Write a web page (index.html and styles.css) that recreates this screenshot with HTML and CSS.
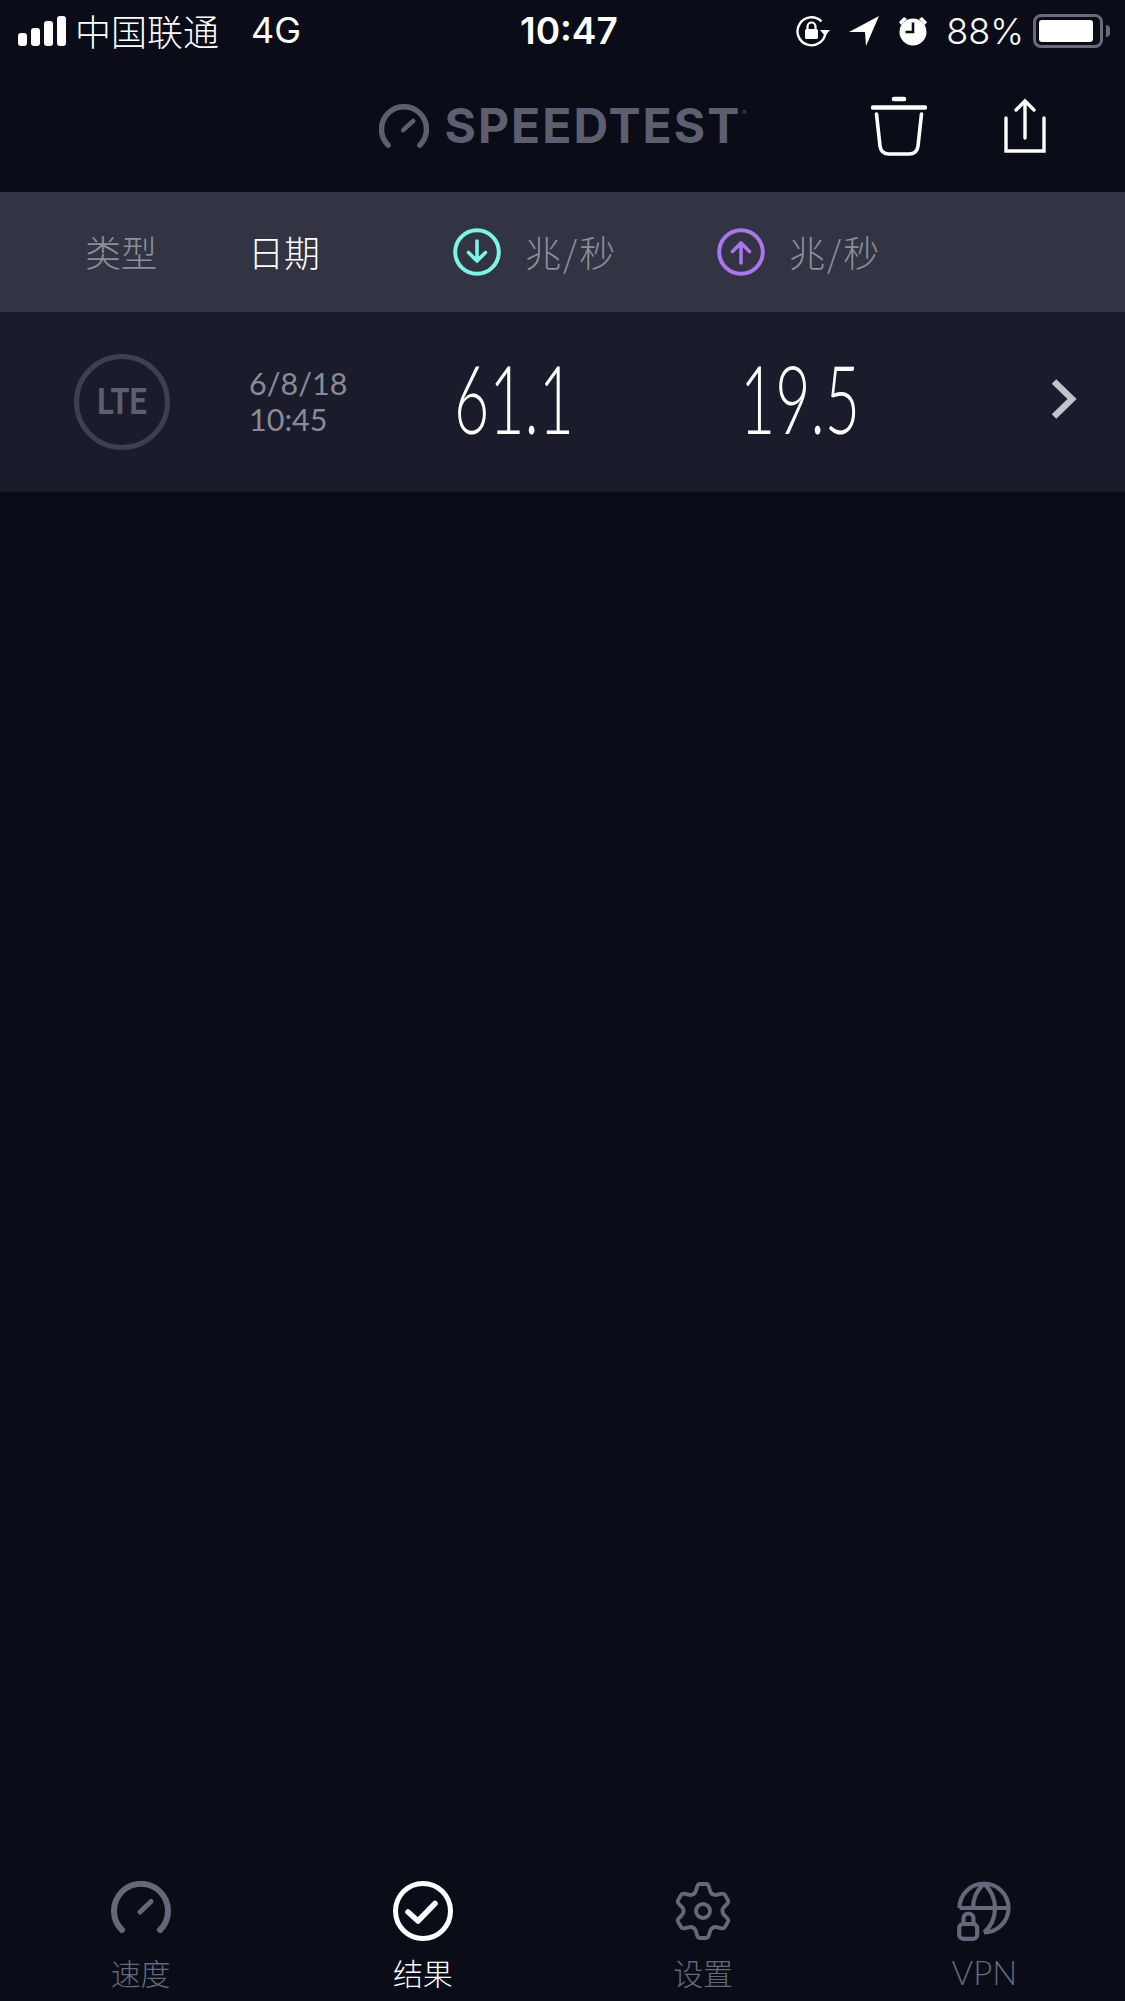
FILE: index.html
```html
<!DOCTYPE html>
<html lang="zh">
<head>
<meta charset="utf-8">
<title>Speedtest</title>
<link rel="stylesheet" href="styles.css">
</head>
<body>
<div class="page">
  <div class="status">
    <div class="status-left">
      <div class="signal"><i class="b1"></i><i class="b2"></i><i class="b3"></i><i class="b4"></i></div>
      <span class="carrier">中国联通</span>
      <span class="net">4G</span>
    </div>
    <div class="clock">10:47</div>
    <div class="status-right">
      <svg class="s-rot" width="34" height="32" viewBox="0 0 34 32"><path d="M29.500 17A14 14 0 1 1 25.500 6.500" fill="none" stroke="#fff" stroke-width="2.400"/><path d="M24 15h10l-5 6z" fill="#fff"/><rect x="9" y="14" width="13" height="10" rx="1.500" fill="#fff"/><path d="M11.500 14v-2.500a4 4 0 0 1 8 0V14" fill="none" stroke="#fff" stroke-width="2.200"/></svg>
      <svg class="s-arrow" width="30" height="30" viewBox="0 0 30 30"><path d="M30 0L0 16h16l1 14z" fill="#fff"/></svg>
      <svg class="s-alarm" width="30" height="31" viewBox="0 0 30 31"><circle cx="15" cy="17" r="13.500" fill="#fff"/><path d="M15 7.500V17H7.500" fill="none" stroke="#0a0c18" stroke-width="2.600"/><path d="M1 7l5-5 3 2-6 6zM29 7l-5-5-3 2 6 6z" fill="#fff"/></svg>
      <span class="pct">88%</span>
      <div class="battery"><div class="battery-fill"></div></div>
      <div class="nub"></div>
    </div>
  </div>

  <header class="top">
    <div></div>
    <div class="logo">
      <svg class="logo-gauge" width="50" height="44" viewBox="0 0 60 52"><path d="M11 49A27 27 0 1 1 49 49" fill="none" stroke="#5d5f70" stroke-width="6.500" stroke-linecap="round"/><path d="M29 31L41 20" stroke="#5d5f70" stroke-width="5.500" stroke-linecap="round"/></svg>
      <span class="logo-text">SPEEDTEST</span><span class="logo-r">®</span>
    </div>
    <div class="actions">
      <svg width="56" height="60" viewBox="1 0 56 60"><path d="M24 3h10" stroke="#fff" stroke-width="4.500" stroke-linecap="round"/><path d="M3 11.500H55" stroke="#fff" stroke-width="4.500" stroke-linecap="round"/><path d="M6.500 18L10 50Q11 58 19 58H39Q47 58 48 50L51.500 18" fill="none" stroke="#fff" stroke-width="3.600" stroke-linecap="round"/></svg>
      <svg width="42" height="56" viewBox="0 0 42 56"><path d="M2 20V53H40V20" fill="none" stroke="#fff" stroke-width="3.400" stroke-linecap="round"/><path d="M21 3V40M12 12L21 3L30 12" fill="none" stroke="#fff" stroke-width="3.400" stroke-linecap="round"/></svg>
    </div>
  </header>

  <div class="table-head">
    <div class="th th-type">类型</div>
    <div class="th th-date">日期</div>
    <div class="th th-speed">
      <svg width="48" height="48" viewBox="0 0 48 48"><circle cx="24" cy="24" r="21.800" fill="none" stroke="#7af5e6" stroke-width="4"/><path d="M24 13V33M15.500 24.500L24 33L32.500 24.500" fill="none" stroke="#7af5e6" stroke-width="3.600" stroke-linecap="round" stroke-linejoin="round"/></svg>
      <span class="unit">兆/秒</span>
    </div>
    <div class="th th-speed">
      <svg width="48" height="48" viewBox="0 0 48 48"><circle cx="24" cy="24" r="21.800" fill="none" stroke="#ab75ee" stroke-width="4"/><path d="M24 35V15M15.500 23.500L24 15L32.500 23.500" fill="none" stroke="#ab75ee" stroke-width="3.600" stroke-linecap="round" stroke-linejoin="round"/></svg>
      <span class="unit">兆/秒</span>
    </div>
  </div>

  <div class="table-row">
    <div class="cell-type"><div class="lte"><span>LTE</span></div></div>
    <div class="cell-date"><div>6/8/18</div><div>10:45</div></div>
    <div class="cell-speed"><span class="num">61.1</span></div>
    <div class="cell-speed cell-up"><span class="num">19.5</span></div>
    <svg class="chev" width="26" height="40" viewBox="0 0 26 40"><path d="M3 2.500L21 20L3 37.500" fill="none" stroke="#c3c3cc" stroke-width="6.500"/></svg>
  </div>

  <main class="empty"></main>

  <nav class="tabs">
    <div class="tab">
      <svg width="60" height="60" viewBox="0 0 60 60"><path d="M11 49A27 27 0 1 1 49 49" fill="none" stroke="#666879" stroke-width="6" stroke-linecap="round"/><path d="M29 31L40 20.500" stroke="#666879" stroke-width="5" stroke-linecap="round"/></svg>
      <span>速度</span>
    </div>
    <div class="tab active">
      <svg width="60" height="60" viewBox="0 0 60 60"><circle cx="30" cy="30" r="27.500" fill="none" stroke="#fff" stroke-width="5"/><path d="M15 31L25 40L42 22.500" fill="none" stroke="#fff" stroke-width="5.500" stroke-linecap="round" stroke-linejoin="round"/></svg>
      <span>结果</span>
    </div>
    <div class="tab">
      <svg width="60" height="60" viewBox="0 0 60 60">
        <defs><path id="cog" d="M20.200 13.100Q22 12.500 22.700 10.500L24 6Q24.800 3 27 3H33Q35.200 3 36 6L37.300 10.500Q38 12.500 39.800 13.100"/></defs>
        <g fill="none" stroke="#666879" stroke-width="3.800" stroke-linecap="round">
          <use href="#cog"/><use href="#cog" transform="rotate(60 30 30)"/><use href="#cog" transform="rotate(120 30 30)"/><use href="#cog" transform="rotate(180 30 30)"/><use href="#cog" transform="rotate(240 30 30)"/><use href="#cog" transform="rotate(300 30 30)"/>
          <circle cx="30" cy="30" r="7"/>
        </g>
      </svg>
      <span>设置</span>
    </div>
    <div class="tab">
      <svg width="60" height="60" viewBox="-3 0 60 60"><g fill="none" stroke="#666879" stroke-width="4.200"><path d="M2.500 27A24.500 24.500 0 1 1 27 51.500"/><path d="M2.500 27H51.500"/><path d="M27 2.500Q16 13 16 27"/><path d="M27 2.500Q38 13 38 27Q38 42 27 51.500"/><rect x="2.200" y="43" width="18" height="14.800" rx="4"/><path d="M6.500 43V37.500a5 5 0 0 1 10 0V43"/></g></svg>
      <span class="tab-latin">VPN</span>
    </div>
  </nav>
</div>
</body>
</html>
```

FILE: styles.css
```css
* { box-sizing: border-box; }
html, body { margin: 0; padding: 0; background: #0a0c18; }
body { font-family: "Noto Sans CJK SC", "Inter", sans-serif; color: #fff; }
.page { width: 1125px; height: 2001px; display: flex; flex-direction: column; overflow: hidden; }

.status { height: 60px; padding: 0 15px 1px 18px; display: grid; grid-template-columns: 502px auto 1fr; align-items: center; }
.status-left { display: flex; align-items: center; }
.signal { display: flex; align-items: flex-end; gap: 4px; height: 30px; margin-top: 2px; }
.signal i { display: block; width: 9px; border-radius: 3px; background: #fff; }
.signal .b1 { height: 13px; }
.signal .b2 { height: 18px; }
.signal .b3 { height: 25px; }
.signal .b4 { height: 30px; }
.carrier { margin-left: 9px; font-size: 36px; line-height: 40px; font-weight: 300; }
.net { margin-left: 32px; font-family: "Inter", sans-serif; font-size: 36px; font-weight: 400; line-height: 40px; }
.clock { font-family: "Inter", sans-serif; font-size: 37px; font-weight: 600; line-height: 40px; margin-top: 2px; }
.status-right { display: flex; align-items: center; justify-content: flex-end; margin-top: 2px; }
.s-arrow { margin-left: 19px; }
.s-alarm { margin-left: 19px; }
.pct { margin-left: 18px; font-family: "Inter", sans-serif; font-size: 36px; font-weight: 300; line-height: 40px; }
.battery { margin-left: 9px; width: 70px; height: 34px; border: 3px solid #6a6b78; border-radius: 8px; padding: 3px; }
.battery-fill { width: 54px; height: 22px; background: #fff; border-radius: 3px; }
.nub { width: 4px; height: 12px; margin-left: 3px; background: #6a6b78; border-radius: 0 4px 4px 0; }

.top { height: 132px; display: grid; grid-template-columns: 1fr auto 1fr; align-items: center; }
.logo { display: flex; align-items: center; color: #5d5f70; }
.logo-gauge { margin-right: 16px; }
.logo-text { font-family: "Inter", sans-serif; font-weight: 700; font-size: 48px; line-height: 50px; letter-spacing: 2px; }
.logo-r { font-size: 9px; align-self: flex-start; margin-top: 6px; margin-left: 1px; }
.actions { display: flex; align-items: center; justify-content: flex-end; gap: 77px; padding-right: 79px; }

.table-head, .table-row { display: grid; grid-template-columns: 250px 203px 264px 1fr; align-items: center; }
.table-head { height: 120px; background: #323443; }
.th { font-size: 36px; font-weight: 300; line-height: 48px; color: #8d8e9b; padding-bottom: 2px; }
.th-type { padding-left: 85px; }
.th-date { margin-left: -2px; color: #fff; }
.th-speed { display: flex; align-items: center; gap: 24px; padding-bottom: 0; }
.unit { letter-spacing: 2px; margin-top: -2px; }

.table-row { position: relative; height: 180px; background: #1a1c2c; }
.lte { margin-left: 74px; width: 96px; height: 96px; border: 5px solid #3e404f; border-radius: 50%; display: flex; align-items: center; justify-content: center; }
.lte span { font-family: "Roboto", sans-serif; font-weight: 700; font-size: 36px; color: #5d5f70; display: inline-block; transform: scaleX(.85); }
.cell-date { font-family: "Lato", sans-serif; font-size: 30.500px; line-height: 36px; color: #8a8b98; margin: -2px 0 0 -1px; }
.cell-speed { padding-left: 1px; margin-top: -10px; }
.cell-up { padding-left: 23px; }
.num { display: inline-block; font-family: "Lato", sans-serif; font-weight: 300; font-size: 95px; line-height: 100px; transform: scaleX(.64); transform-origin: left center; }
.chev { position: absolute; right: 48px; top: 67px; }

.empty { flex: 1; }
.tabs { height: 120px; display: grid; grid-template-columns: repeat(4, 1fr); }
.tab { display: flex; flex-direction: column; align-items: center; color: #666879; font-size: 30px; font-weight: 300; }
.tab span { margin-top: 15px; line-height: 32px; }
.tab.active { color: #fff; padding-left: 2px; }
.tab-latin { font-family: "Lato", sans-serif; font-size: 33px; }
```
